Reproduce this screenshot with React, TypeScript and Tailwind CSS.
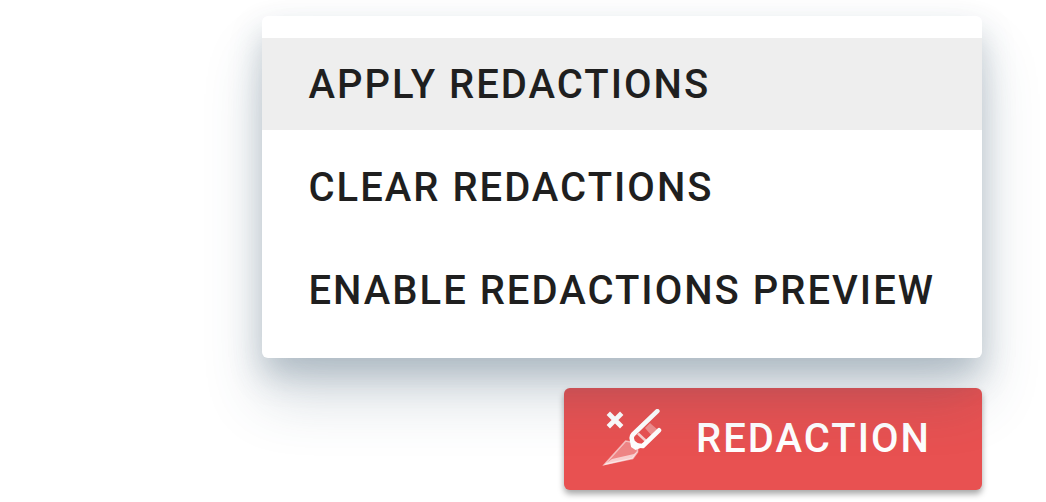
const actions = ["APPLY REDACTIONS", "CLEAR REDACTIONS", "ENABLE REDACTIONS PREVIEW"];

function ScalpelIcon() {
  return (
    <svg viewBox="0 1 60 60" className="size-15 shrink-0" fill="none" stroke="#fff" aria-hidden="true">
      <path d="M6.3 5.3 19.7 18.7M19.7 5.3 6.3 18.7" strokeWidth="4.8" />
      <path d="M23.7 33 2.5 56.5 30.7 50.5 35.5 44V39L29 34Z" fill="#fff" fillOpacity=".3" strokeOpacity=".55" strokeWidth="1.6" />
      <path d="M1 57.5 10 51 32 46 35.5 43 30.7 50.5Z" fill="#fff" fillOpacity=".6" stroke="none" />
      <path d="m43 20 5-5 8.500 7.500-6 6Z" fill="#fff" fillOpacity=".35" stroke="none" />
      <path d="m36 25.500 8 7.500" strokeWidth="2.5" strokeOpacity=".7" />
      <path d="M55.300 3.200 31 26.500Q29 29 30 31.500L31 37 40.800 38 57 22.300" strokeWidth="4.6" strokeLinecap="round" strokeLinejoin="round" />
      <path d="m29 30 12 9-7.500 3-4.500-3Z" fill="#fff" stroke="none" />
    </svg>
  );
}

export default function App() {
  return (
    <main className="flex flex-col items-end gap-[30px] bg-white pt-4 pr-16 pb-3 font-['Roboto',sans-serif] text-[40px] leading-[52px] font-medium">
      <ul className="relative z-10 flex flex-col gap-[11px] rounded-md bg-white py-[22px] text-[#1f1f1f] shadow-[0_40px_60px_rgba(50,80,105,0.2),0_16px_32px_rgba(50,80,105,0.26)]">
        {actions.map((label, index) => (
          <li key={label}>
            <button
              type="button"
              className={`block w-full pt-[21px] pr-[47px] pb-[19px] pl-[46px] text-left tracking-wider whitespace-nowrap ${index === 0 ? "bg-[#eeeeee]" : "bg-white"}`}
            >
              {label}
            </button>
          </li>
        ))}
      </ul>
      <button
        type="button"
        className="flex items-center gap-[34px] rounded-md bg-[#e85151] py-[21px] pr-[51px] pl-[38px] tracking-wider text-white shadow-[0_4px_6px_rgba(0,0,0,0.35)]"
      >
        <ScalpelIcon />
        REDACTION
      </button>
    </main>
  );
}
